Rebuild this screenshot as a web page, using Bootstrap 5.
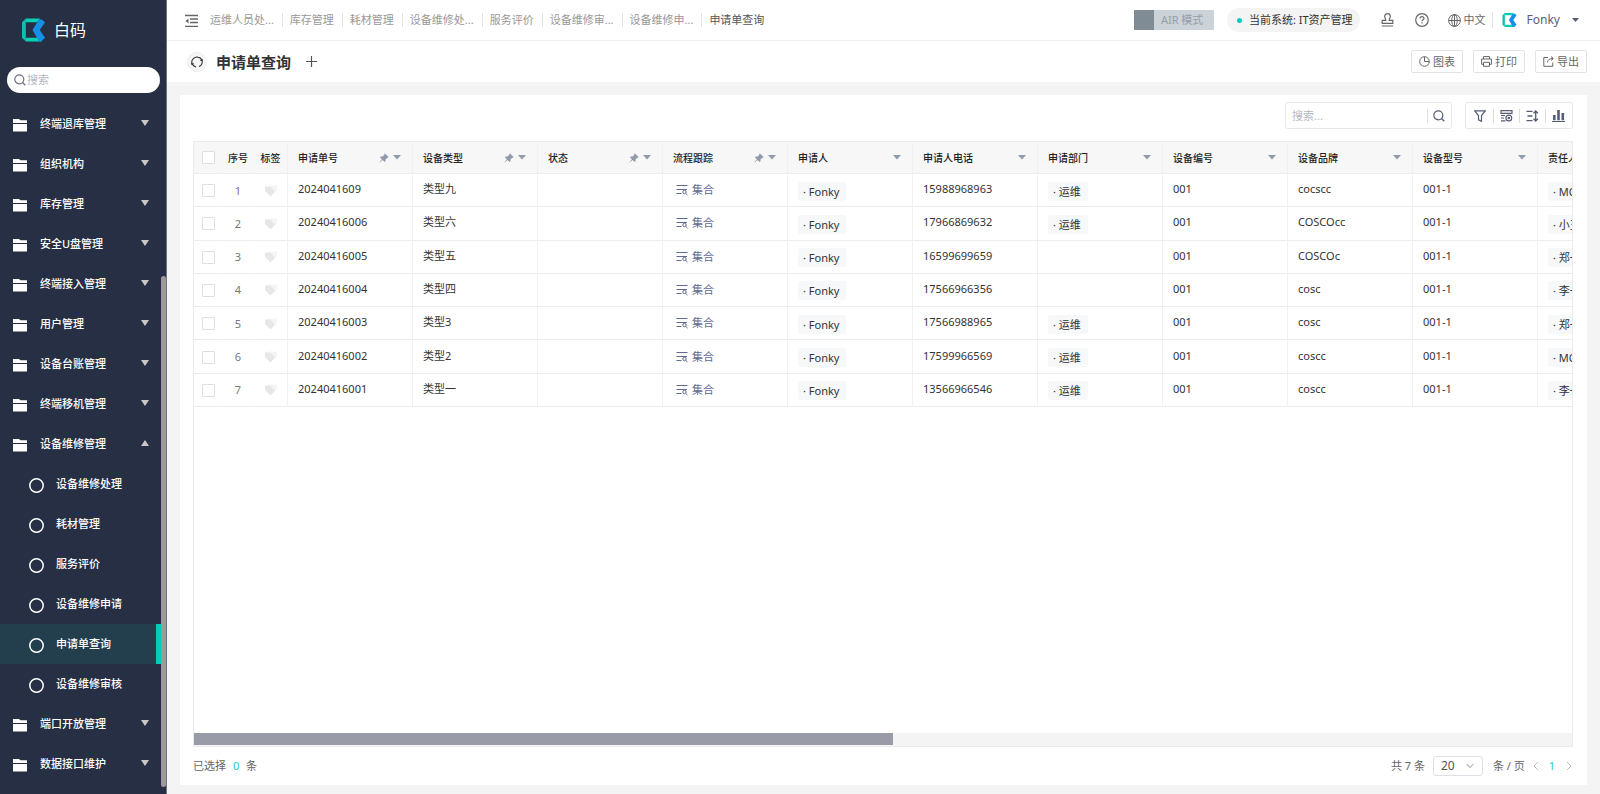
<!DOCTYPE html>
<html lang="zh-CN">
<head>
<meta charset="utf-8">
<meta name="viewport" content="width=device-width, initial-scale=1">
<title>申请单查询</title>
<link href="https://cdn.jsdelivr.net/npm/bootstrap@5.3.0/dist/css/bootstrap.min.css" rel="stylesheet">
<style>
  body { font-family: "Noto Sans", "Noto Sans CJK SC", sans-serif; font-size: 11px; line-height: 16px; color: #333; background: #f4f4f4; }
  a { text-decoration: none; color: inherit; }
  svg { display: block; flex: none; }
  button { background: none; border: 0; padding: 0; color: inherit; }

  .side { width: 167px; background: #262f43; color: #fff; position: relative; flex: none; border-right: 1px solid #6d7383; }
  .brand { height: 60px; padding-left: 22px; gap: 9px; font-size: 16px; line-height: 24px; }
  .side-search { margin: 7px 6px 11px 7px; height: 26px; border-radius: 13px; background: #fff; padding: 0 7px; gap: 1px; color: #6a7386; }
  .side-search input, .find input { border: 0; outline: 0; min-width: 0; padding: 0; background: none; font-size: 11px; color: #333; }
  input::placeholder { color: #b4b8bf; opacity: 1; }
  .entry { height: 40px; padding: 2px 12px 0 13px; gap: 13px; font-weight: 500; margin-right: 5px; }
  .entry .label { flex: 1; padding-bottom: 2px; }
  .entry .arrow { color: #c9c8c6; margin-bottom: 4px; }
  .entry.sub { padding-left: 29px; gap: 12px; }
  .entry.active { background: #233f4e; border-right: 5px solid #00cdb7; }
  .side-thumb { position: absolute; right: 0; top: 276px; bottom: 7px; width: 5px; border-radius: 3px; background: #9c9998; }

  .topbar { height: 41px; background: #fff; border-bottom: 1px solid #efefef; padding: 0 21px 0 18px; color: #666; }
  .fold { padding-top: 2px; }
  .tabs { margin-left: 4px; color: #999; }
  .tabs a { padding: 0 8px; line-height: 14px; border-right: 1px solid #e4e4e4; margin-right: -1px; }
  .tabs a:last-child { border: 0; color: #555; }
  .air { width: 80px; height: 20px; background: #cbd2d8; color: #93a0ab; border-radius: 1px; }
  .air i { width: 20px; height: 20px; background: #7f8c96; margin-right: 7px; }
  .pill { height: 24px; border-radius: 12px; background: #f4f4f4; padding: 0 7px 0 10px; gap: 7px; color: #333; margin: 0 21px 0 13px; }
  .pill i { width: 5px; height: 5px; border-radius: 50%; background: #00cdb7; }
  .help { margin: 0 19px 0 21px; }
  .lang { gap: 3px; }
  .user { color: #565e75; font-size: 12px; border-left: 1px solid #e4e4e4; padding-left: 9px; margin-left: 6px; }
  .user span { margin: 0 12px 0 10px; }

  .titlebar { height: 41px; background: #fff; padding: 0 13px 0 20px; }
  .titlebar h1 { font-size: 15px; line-height: 20px; font-weight: 700; margin: 0 15px 0 9px; color: #333; }
  .round { width: 20px; height: 20px; border-radius: 50%; background: #f6f6f6; border: 1px solid #ededed; color: #333; }
  .act { height: 23px; border: 1px solid #e3e3e3; border-radius: 2px; background: #fff; padding: 0 7px; gap: 3px; color: #666; margin-left: 10px; }

  .panel { margin: 13px 13px 9px; background: #fff; padding: 7px 14px 0 13px; }
  .find { width: 167px; height: 27px; border: 1px solid #e6e7ea; border-radius: 3px; padding: 0 6px; color: #565e75; }
  .find button { border-left: 1px solid #e0e1e4; padding-left: 5px; height: 14px; }
  .tools { height: 27px; border: 1px solid #e6e7ea; border-radius: 3px; margin-left: 13px; padding: 0 1px; color: #565e75; }
  .tools button { width: 26px; height: 14px; border-left: 1px solid #dcdde0; }
  .tools button:first-child { border: 0; }

  .grid-box { margin-top: 12px; border: 1px solid #ebebeb; overflow: hidden; }
  .grid-scroll { overflow-x: auto; min-width: 0; scrollbar-width: none; }
  .grid-scroll::-webkit-scrollbar { display: none; }
  table.grid { table-layout: fixed; width: 1469px; height: 265px; border-collapse: separate; border-spacing: 0; }
  .grid th { height: 32px; background: #f7f7f7; font-size: 10px; font-weight: 500; color: #222; }
  .grid td { height: 33px; }
  .grid th, .grid td { border-bottom: 1px solid #ececec; border-right: 1px solid #f0f1f2; padding: 0 10px; white-space: nowrap; overflow: hidden; vertical-align: middle; }
  .grid td { padding-bottom: 2px; }
  .grid .bare { border-right-color: transparent; padding: 0; text-align: center; }
  .grid .tag-col { padding: 0; text-align: center; }
  .grid td.bare, .grid td.tag-col { padding: 1px 0 0; color: #777; }
  .grid .tag-col svg { margin: 0 auto; }
  .grid .form-check-input { display: block; width: 13px; height: 13px; margin: 0 auto; border: 1px solid #dcdfe3; border-radius: 1px; box-shadow: none; }
  .grid .marks { color: #8f9bab; gap: 4px; margin-right: 1px; }
  .chip { display: inline-block; height: 19px; line-height: 20px; margin-top: 4px; padding: 0 7px 0 5px; background: #f7f8fa; border-radius: 2px; }
  .flow { color: #5d6a92; gap: 4px; padding: 2px 0 0 3px; }
  .track { height: 13px; background: #f4f4f4; }
  .track div { height: 12px; background: #999ca6; }
  .foot { height: 38px; color: #666; }
  .foot .hit { color: #1fcbb8; }
  .pager .hit { margin: 0 11px 0 10px; }
  .pager { margin-right: 1px; }
  .pager .form-select { width: 50px; height: 20px; margin: 0 10px 0 8px; padding: 0 7px; font-size: 12px; line-height: 18px; border: 1px solid #dcdfe3; border-radius: 3px; color: #555;
    background-image: url("data:image/svg+xml,%3Csvg xmlns='http://www.w3.org/2000/svg' viewBox='0 0 8 8'%3E%3Cpath d='M.7 2.2 4 5.5l3.3-3.3' fill='none' stroke='%23888'/%3E%3C/svg%3E"); background-size: 8px 8px; background-position: right 8px center; }
</style>
</head>
<body>
<svg width="0" height="0" class="position-absolute" aria-hidden="true">
  <defs>
    <symbol id="logo" viewBox="0 0 24 24"><path d="M4 0h15l-3.5 4H4zM4 20h13l4 4H4z" fill="#05d2b5"/><path d="M0 4 4 0v24l-4-4z" fill="#0cbfae"/><path d="M17.500 1h3L24 4l-5.500 8 5.500 8-3.500 3.500h-3L11 12z" fill="#1590e8"/></symbol>
    <symbol id="lens" viewBox="0 0 12 12"><circle cx="5.300" cy="5.300" r="4.500" fill="none" stroke="currentColor" stroke-width="1.200"/><path d="m8.500 8.500 2.800 2.800" stroke="currentColor" stroke-width="1.300"/></symbol>
    <symbol id="folder" viewBox="0 0 14 13"><path d="M0 0h6l1.500 1.300H14V4H0zM0 5h14v7.500H0z" fill="currentColor"/></symbol>
    <symbol id="ring" viewBox="0 0 15 15"><circle cx="7.500" cy="7.500" r="6.700" fill="none" stroke="currentColor" stroke-width="1.500"/></symbol>
    <symbol id="down" viewBox="0 0 8 6"><path d="M0 0h8L4 6z" fill="currentColor"/></symbol>
    <symbol id="up" viewBox="0 0 8 6"><path d="M0 6h8L4 0z" fill="currentColor"/></symbol>
    <symbol id="pin" viewBox="0 0 10 10"><path d="M5.800.4 9.600 4l-.9.900-.5-.2-1.700 1.800v1.700l-.8.900-2.200-2.200L.6 9.500.4 9.300l2.500-3L.9 4.300l.8-.8 1.900.1 1.800-1.800-.3-.7z" fill="currentColor"/></symbol>
    <symbol id="tags" viewBox="0 0 12 12"><path d="M3 .5h9v4.500L7.500 10z" fill="#f5f5f5"/><path d="M0 1.500h5L10 6.500 5.500 11.500 0 6z" fill="#e6e7e8"/></symbol>
    <symbol id="flow" viewBox="0 0 12 12"><g fill="none" stroke="currentColor"><path d="M.5 1.500h11M.5 5.500h10.500M.5 9.500h5"/><circle cx="8.500" cy="8" r="1.700"/><path d="m9.700 9.300 1.800 1.800"/></g></symbol>
  </defs>
</svg>

<div class="d-flex min-vh-100">
  <aside class="side">
    <a href="#" class="brand d-flex align-items-center"><svg width="23" height="24"><use href="#logo"/></svg>白码</a>
    <label class="side-search d-flex align-items-center"><svg width="12" height="12"><use href="#lens"/></svg><input class="flex-fill" type="text" placeholder="搜索" aria-label="搜索"></label>
    <nav id="menu" class="d-flex flex-column"></nav>
    <div class="side-thumb"></div>
  </aside>

  <div class="d-flex flex-column flex-fill overflow-hidden">
    <header class="topbar d-flex align-items-center">
      <button class="fold" aria-label="折叠菜单"><svg width="13" height="14" viewBox="0 0 13 14" fill="none" stroke="currentColor" stroke-width="1.300"><path d="M0 1.500h13M5 5h8M5 8.500h8M0 12.300h13"/><path d="M3.500 4.500v5L.5 7z" fill="currentColor" stroke="none"/></svg></button>
      <nav class="tabs d-flex"><a href="#">运维人员处...</a><a href="#">库存管理</a><a href="#">耗材管理</a><a href="#">设备维修处...</a><a href="#">服务评价</a><a href="#">设备维修审...</a><a href="#">设备维修申...</a><a href="#">申请单查询</a></nav>
      <div class="ms-auto d-flex align-items-center">
        <button class="air d-flex align-items-center"><i></i>AIR 模式</button>
        <span class="pill d-flex align-items-center"><i></i>当前系统: IT资产管理</span>
        <button aria-label="印章"><svg width="13" height="14" viewBox="0 0 13 14" fill="none" stroke="currentColor" stroke-width="1.200"><path d="M4.800 7.300C5 5.800 3.700 5.200 3.700 3.500a2.800 2.800 0 0 1 5.600 0c0 1.700-1.300 2.300-1.100 3.800h3.600v3H1.200v-3zM.8 13h11.400"/></svg></button>
        <button class="help" aria-label="帮助"><svg width="14" height="14" viewBox="0 0 14 14" fill="none" stroke="currentColor" stroke-width="1.200"><circle cx="7" cy="7" r="6.300"/><path d="M5 5.600C5 3 9 3 9 5.500 9 6.800 7 6.800 7 8.300M7 9.300v1.200"/></svg></button>
        <button class="lang d-flex align-items-center"><svg width="13" height="13" viewBox="0 0 13 13" fill="none" stroke="currentColor"><circle cx="6.500" cy="6.500" r="5.900"/><ellipse cx="6.500" cy="6.500" rx="2.800" ry="5.900"/><path d="M.6 6.500h11.800M6.500.6v11.800"/></svg>中文</button>
        <button class="user d-flex align-items-center"><svg width="15" height="14"><use href="#logo"/></svg><span>Fonky</span><svg width="7" height="4" viewBox="0 0 8 6" preserveAspectRatio="none"><path d="M0 0h8L4 6z" fill="currentColor"/></svg></button>
      </div>
    </header>

    <div class="titlebar d-flex align-items-center">
      <button class="round d-flex align-items-center justify-content-center" aria-label="刷新"><svg width="12" height="12" viewBox="0 0 12 12" fill="none" stroke="currentColor" stroke-width="1.100"><path d="M1.200 8A5 5 0 0 1 4 1.400M7 1.100A5 5 0 0 1 10.800 4M10.800 8A5 5 0 0 1 8 10.600M5 10.900A5 5 0 0 1 1.500 8.300M10.800 4A5 5 0 0 1 10.700 8M4 1.400A5 5 0 0 1 7 1.100M0 7.500l1.300 1 1.300-1.200M12 4.500l-1.300-1-1.300 1.200"/></svg></button>
      <h1>申请单查询</h1>
      <button aria-label="新增"><svg width="11" height="11" viewBox="0 0 11 11" stroke="#555" stroke-width="1.200"><path d="M5.500 0v11M0 5.500h11"/></svg></button>
      <div class="ms-auto d-flex">
        <button class="act d-flex align-items-center"><svg width="11" height="11" viewBox="0 0 11 11" fill="none" stroke="currentColor"><circle cx="5.500" cy="5.500" r="4.800"/><path d="M5.500.8v4.700h4.700"/></svg>图表</button>
        <button class="act d-flex align-items-center"><svg width="11" height="11" viewBox="0 0 11 11" fill="none" stroke="currentColor"><path d="M2.500 3V.6h6V3M2.500 8.300H.6V3h9.800v5.300H8.500M2.500 6.300h6v4h-6z"/></svg>打印</button>
        <button class="act d-flex align-items-center"><svg width="11" height="11" viewBox="0 0 11 11" fill="none" stroke="currentColor"><path d="M5 1.500H.8v8.800h9V6.500M4.500 6.500C4.500 4 6.500 2.500 10 2.500M8 .5l2.300 2L8 4.500"/></svg>导出</button>
      </div>
    </div>

    <main class="panel d-flex flex-column flex-fill">
      <div class="d-flex justify-content-end">
        <div class="find d-flex align-items-center"><input class="flex-fill" type="text" placeholder="搜索..." aria-label="搜索表格"><button aria-label="搜索"><svg width="12" height="12"><use href="#lens"/></svg></button></div>
        <div class="tools d-flex align-items-center">
          <button class="d-flex align-items-center justify-content-center" aria-label="筛选"><svg width="12" height="12" viewBox="0 0 12 12" fill="none" stroke="currentColor" stroke-width="1.200"><path d="M.7.800h10.600L7.500 5.500v5.800l-3-1.500V5.500z"/></svg></button>
          <button class="d-flex align-items-center justify-content-center" aria-label="列设置"><svg width="13" height="12" viewBox="0 0 13 12" fill="none" stroke="currentColor" stroke-width="1.200"><path d="M1 .7h11v2.600H1zM1 5.500h4M1 8h3M1 10.800h4.500"/><circle cx="8.800" cy="8" r="2.900"/><circle cx="8.800" cy="8" r=".7"/></svg></button>
          <button class="d-flex align-items-center justify-content-center" aria-label="行高"><svg width="13" height="12" viewBox="0 0 13 12" fill="none" stroke="currentColor" stroke-width="1.300"><path d="M.5 1.300h6M1.500 6h5M.5 10.700h6M9.700 1v10M7.500 3.200l2.200-2.200 2.200 2.200M7.500 8.800l2.200 2.200 2.200-2.200"/></svg></button>
          <button class="d-flex align-items-center justify-content-center" aria-label="统计"><svg width="13" height="12" viewBox="0 0 13 12" fill="currentColor"><path d="M0 11h13v1H0zM1 5h2.600v5.300H1zM5.200 0h2.600v10.300H5.200zM9.500 3h2.600v7.300H9.500z"/></svg></button>
        </div>
      </div>

      <div class="grid-box d-flex flex-column flex-fill">
        <div class="grid-scroll">
          <table class="grid">
            <colgroup><col style="width:29px"><col style="width:31px"><col style="width:34px"></colgroup>
            <thead><tr id="head"></tr></thead>
            <tbody id="rows"></tbody>
          </table>
        </div>
        <div class="track mt-auto"><div style="width:50.7%"></div></div>
      </div>

      <footer class="foot d-flex align-items-center justify-content-between">
        <span>已选择 <span class="hit mx-1">0</span> 条</span>
        <div class="pager d-flex align-items-center">
          <span>共 7 条</span>
          <select class="form-select" aria-label="每页条数"><option>20</option><option>50</option></select>
          <span>条 / 页</span>
          <button class="ms-2" aria-label="上一页"><svg width="6" height="10" viewBox="0 0 6 10" fill="none" stroke="#bbb"><path d="M5 1 1 5l4 4"/></svg></button>
          <a href="#" class="hit">1</a>
          <button aria-label="下一页"><svg width="6" height="10" viewBox="0 0 6 10" fill="none" stroke="#bbb"><path d="m1 1 4 4-4 4"/></svg></button>
        </div>
      </footer>
    </main>
  </div>
</div>

<script>
  const icon = (id, w, h, cls = '') => `<svg class="${cls}" width="${w}" height="${h}"><use href="#${id}"/></svg>`;

  const group = (name, open) => `<a href="#" class="entry d-flex align-items-center">${icon('folder', 14, 13)}<span class="label">${name}</span>${icon(open ? 'up' : 'down', 8, 6, 'arrow')}</a>`;
  const leaf = (name) => `<a href="#" class="entry sub d-flex align-items-center${name === '申请单查询' ? ' active' : ''}">${icon('ring', 15, 15)}<span class="label">${name}</span></a>`;
  document.getElementById('menu').innerHTML =
    ['终端退库管理', '组织机构', '库存管理', '安全U盘管理', '终端接入管理', '用户管理', '设备台账管理', '终端移机管理'].map(n => group(n)).join('') +
    group('设备维修管理', true) +
    ['设备维修处理', '耗材管理', '服务评价', '设备维修申请', '申请单查询', '设备维修审核'].map(leaf).join('') +
    ['端口开放管理', '数据接口维护'].map(n => group(n)).join('');

  const columns = ['申请单号', '设备类型', '状态', '流程跟踪', '申请人', '申请人电话', '申请部门', '设备编号', '设备品牌', '设备型号', '责任人'];
  document.getElementById('head').innerHTML =
    '<th class="bare"><input class="form-check-input" type="checkbox" aria-label="全选"></th><th class="bare">序号</th><th class="tag-col">标签</th>' +
    columns.map((c, i) => `<th><div class="d-flex align-items-center justify-content-between"><span>${c}</span><span class="marks d-flex align-items-center">${i < 4 ? icon('pin', 10, 10) : ''}<svg width="8" height="5" viewBox="0 0 8 5"><path d="M0 0h8L4 4.500z" fill="currentColor"/></svg></span></div></th>`).join('');

  const data = [
    ['2024041609', '类型九', '15988968963', '运维', 'cocscc', 'MO'],
    ['20240416006', '类型六', '17966869632', '运维', 'COSCOcc', '小王'],
    ['20240416005', '类型五', '16599699659', '', 'COSCOc', '郑一'],
    ['20240416004', '类型四', '17566966356', '', 'cosc', '李一'],
    ['20240416003', '类型3', '17566988965', '运维', 'cosc', '郑一'],
    ['20240416002', '类型2', '17599966569', '运维', 'coscc', 'MO'],
    ['20240416001', '类型一', '13566966546', '运维', 'coscc', '李一']
  ];
  const chip = t => t ? `<span class="chip">· ${t}</span>` : '';
  document.getElementById('rows').innerHTML = data.map((d, i) => `<tr>
    <td class="bare"><input class="form-check-input" type="checkbox" aria-label="选择第${i + 1}行"></td>
    <td class="bare">${i + 1}</td><td class="tag-col">${icon('tags', 12, 12)}</td>
    <td>${d[0]}</td><td>${d[1]}</td><td></td>
    <td><a href="#" class="flow d-flex align-items-center">${icon('flow', 12, 12)}集合</a></td>
    <td>${chip('Fonky')}</td><td>${d[2]}</td><td>${chip(d[3])}</td>
    <td>001</td><td>${d[4]}</td><td>001-1</td><td>${chip(d[5])}</td></tr>`).join('');
</script>
<script src="https://cdn.jsdelivr.net/npm/bootstrap@5.3.0/dist/js/bootstrap.bundle.min.js"></script>
</body>
</html>
